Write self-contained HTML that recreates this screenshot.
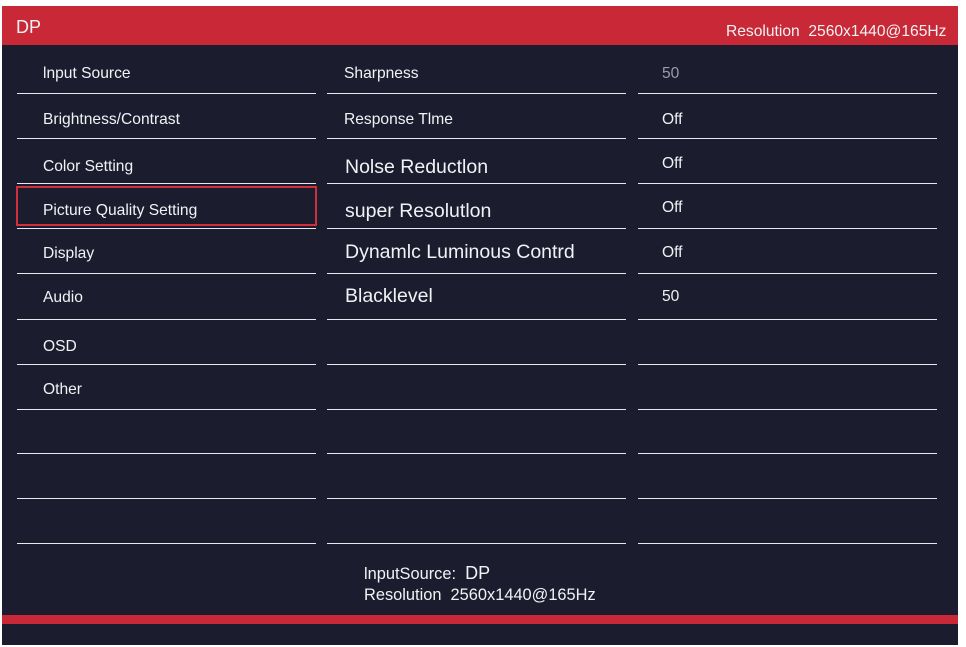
<!DOCTYPE html>
<html><head><meta charset="utf-8"><style>
*{margin:0;padding:0;box-sizing:border-box}
body{width:966px;height:647px;background:#fff;position:relative;overflow:hidden;font-family:"Liberation Sans","Noto Sans CJK SC",sans-serif;color:#f2f2f5}
#f{position:absolute;left:2px;top:6px;width:956px;height:639px;background:#1b1d2f}
#h{position:absolute;left:2px;top:6px;width:956px;height:39px;background:#c92837}
.t{position:absolute;line-height:20px;height:20px;white-space:nowrap;font-size:15.6px}
.b{font-size:19.5px}
.l{position:absolute;height:1px;background:#e8e8ee}
</style></head><body>
<div id="f"></div>
<div id="h"></div>
<div class="t" style="left:16px;top:17px;font-size:18px">DP</div>
<div class="t" style="left:726px;top:22px;font-size:15.6px">Resolution&nbsp; 2560x1440@165Hz</div>

<div class="t" style="left:43px;top:64px">lnput Source</div>
<div class="t" style="left:43px;top:110px">Brightness/Contrast</div>
<div class="t" style="left:43px;top:157px">Color Setting</div>
<div class="t" style="left:43px;top:201px">Picture Quality Setting</div>
<div class="t" style="left:43px;top:244px">Display</div>
<div class="t" style="left:43px;top:288px">Audio</div>
<div class="t" style="left:43px;top:337px">OSD</div>
<div class="t" style="left:43px;top:380px">Other</div>
<div style="position:absolute;left:16px;top:186px;width:301px;height:40px;border:2px solid #d0303c"></div>

<div class="t" style="left:344px;top:64px">Sharpness</div>
<div class="t" style="left:344px;top:110px">Response Tlme</div>
<div class="t b" style="left:345px;top:157px">Nolse Reductlon</div>
<div class="t b" style="left:345px;top:201px">super Resolutlon</div>
<div class="t b" style="left:345px;top:242px">Dynamlc Luminous Contrd</div>
<div class="t b" style="left:345px;top:286px">Blacklevel</div>

<div class="t" style="left:662px;top:64px;color:#9a9ca8">50</div>
<div class="t" style="left:662px;top:110px">Off</div>
<div class="t" style="left:662px;top:154px">Off</div>
<div class="t" style="left:662px;top:198px">Off</div>
<div class="t" style="left:662px;top:243px">Off</div>
<div class="t" style="left:662px;top:287px">50</div>

<div class="l" style="left:17px;top:93px;width:299px"></div><div class="l" style="left:327px;top:93px;width:299px"></div><div class="l" style="left:638px;top:93px;width:299px"></div>
<div class="l" style="left:17px;top:138px;width:299px"></div><div class="l" style="left:327px;top:138px;width:299px"></div><div class="l" style="left:638px;top:138px;width:299px"></div>
<div class="l" style="left:17px;top:183px;width:299px"></div><div class="l" style="left:327px;top:183px;width:299px"></div><div class="l" style="left:638px;top:183px;width:299px"></div>
<div class="l" style="left:17px;top:228px;width:299px"></div><div class="l" style="left:327px;top:228px;width:299px"></div><div class="l" style="left:638px;top:228px;width:299px"></div>
<div class="l" style="left:17px;top:273px;width:299px"></div><div class="l" style="left:327px;top:273px;width:299px"></div><div class="l" style="left:638px;top:273px;width:299px"></div>
<div class="l" style="left:17px;top:319px;width:299px"></div><div class="l" style="left:327px;top:319px;width:299px"></div><div class="l" style="left:638px;top:319px;width:299px"></div>
<div class="l" style="left:17px;top:364px;width:299px"></div><div class="l" style="left:327px;top:364px;width:299px"></div><div class="l" style="left:638px;top:364px;width:299px"></div>
<div class="l" style="left:17px;top:409px;width:299px"></div><div class="l" style="left:327px;top:409px;width:299px"></div><div class="l" style="left:638px;top:409px;width:299px"></div>
<div class="l" style="left:17px;top:453px;width:299px"></div><div class="l" style="left:327px;top:453px;width:299px"></div><div class="l" style="left:638px;top:453px;width:299px"></div>
<div class="l" style="left:17px;top:498px;width:299px"></div><div class="l" style="left:327px;top:498px;width:299px"></div><div class="l" style="left:638px;top:498px;width:299px"></div>
<div class="l" style="left:17px;top:543px;width:299px"></div><div class="l" style="left:327px;top:543px;width:299px"></div><div class="l" style="left:638px;top:543px;width:299px"></div>

<div class="t" style="left:364px;top:563px;font-size:16.4px">lnputSource:&nbsp; <span style="font-size:18px">DP</span></div>
<div class="t" style="left:364px;top:585px;font-size:16.4px">Resolution&nbsp; 2560x1440@165Hz</div>
<div style="position:absolute;left:2px;top:615px;width:956px;height:9px;background:#c92837"></div>
</body></html>
